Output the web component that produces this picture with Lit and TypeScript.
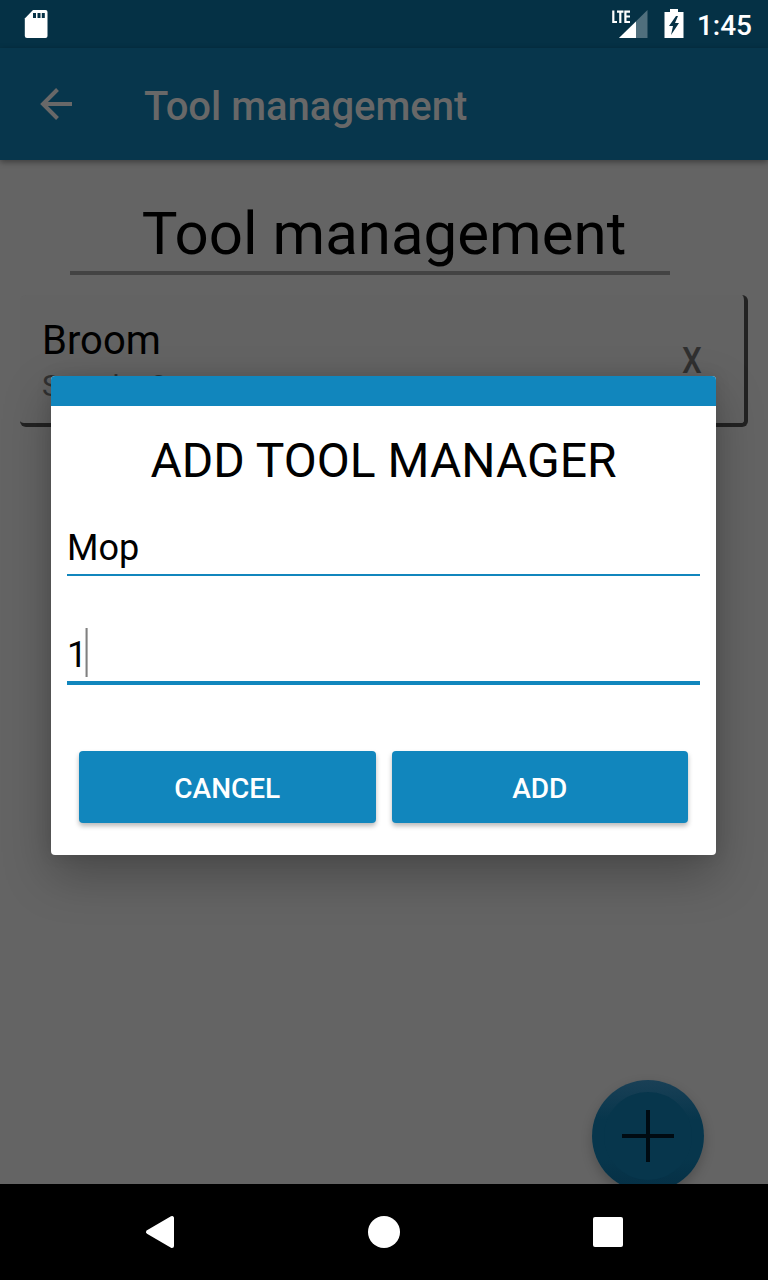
import { LitElement, html, css } from "lit";
import { customElement } from "lit/decorators.js";

@customElement("app-root")
export class AppRoot extends LitElement {
  static styles = css`
    :host { display: block; font-family: Roboto, sans-serif; color: #000; }
    * { box-sizing: border-box; }
    .screen { position: relative; width: 768px; height: 1280px; overflow: hidden; display: flex; flex-direction: column; background: #646464; }
    .status { height: 48px; flex: none; background: #053145; display: flex; align-items: center; padding: 0 16px 0 24px; color: #fff; }
    .status .gap { flex: 1; }
    .status svg, .bar svg, .nav svg, .fab svg { display: block; flex: none; }
    .signal { margin-right: 16px; }
    .clock { font-size: 28px; font-weight: 500; line-height: 46px; margin-left: 13px; padding-top: 4px; }
    .bar { height: 112px; flex: none; background: #07364c; display: flex; align-items: center; padding-left: 32px; box-shadow: 0 2px 6px rgba(0,0,0,.4); z-index: 1; color: #686868; }
    .bar h1 { margin: 5px 0 0 64px; font-size: 40px; line-height: 48px; font-weight: 500; }
    .content { flex: 1; padding: 32px 20px 0; }
    .title { width: 600px; margin: 0 0 0 50px; height: 83px; border-bottom: 4px solid #434343; font-size: 60px; line-height: 83px; text-align: center; padding-left: 28px; }
    .card { margin-top: 20px; height: 132px; border-radius: 6px; border-right: 4px solid #222; border-bottom: 4px solid #222; background: #636363; display: flex; align-items: center; justify-content: space-between; padding: 0 42px 0 22px; }
    .info { padding-top: 7px; }
    .name { font-size: 40px; line-height: 47px; }
    .sub { font-size: 30px; line-height: 44px; letter-spacing: 2.6px; color: #323232; }
    .remove { font-size: 36px; color: #303030; font-weight: 500; transform: translate(1.5px, 2px) scaleX(.87); }
    .fab { position: absolute; left: 592px; top: 1080px; width: 112px; height: 112px; border-radius: 50%; background: linear-gradient(#1a4056, #07364c 35%, #07364c 70%, #052f44); display: grid; place-items: center; box-shadow: 0 5px 12px rgba(0,0,0,.22); }
    .fab::before { content: ""; grid-area: 1/1; width: 88px; height: 88px; border-radius: 50%; background: #07364c; }
    .fab svg { grid-area: 1/1; }
    .nav { height: 96px; flex: none; background: #000; z-index: 1; display: flex; justify-content: space-between; align-items: center; padding: 0 144px; }
    .dialog { position: absolute; z-index: 2; left: 51px; top: 376px; width: 665px; height: 479px; border-radius: 4px; background: #fff; box-shadow: 0 20px 48px rgba(0,0,0,.27), 0 0 16px rgba(0,0,0,.1); display: flex; flex-direction: column; }
    .strip { height: 30px; flex: none; background: #1186bd; border-radius: 4px 4px 0 0; }
    .dialog h2 { margin: 27px 0 0; font-weight: 400; font-size: 48px; line-height: 56px; text-align: center; }
    .field { margin: 0 16px; font-size: 36px; line-height: 42px; display: flex; }
    .first { margin-top: 32px; height: 55px; border-bottom: 2px solid #1186bd; }
    .first span { padding-top: 6px; }
    .second { margin-top: 52px; height: 57px; border-bottom: 4px solid #1186bd; }
    .second span { padding-top: 6px; }
    .caret { width: 3px; height: 49px; background: linear-gradient(90deg, #c4c4c4 1px, #808080 1px 2px, #b0b0b0 2px); margin-left: -2px; }
    .actions { margin: 66px 28px 0; display: flex; gap: 16px; }
    .btn { flex: 1; height: 72px; border: 0; border-radius: 4px; padding: 2px 0 0; background: #1186bd; color: #fff; font: 500 28px/72px Roboto, sans-serif; box-shadow: 0 3px 5px rgba(0,0,0,.28); }
  `;

  render() {
    return html`
      <div class="screen">
        <div class="status">
          <svg width="24" height="48" viewBox="0 0 24 48"><path fill="#fff" d="M9 10H21.500Q23.500 10 23.500 12V36Q23.500 38 21.500 38H3Q.8 38 .8 36V18.500Z"/><path fill="#053145" d="M9 13h3v5H9zm4.500 0h3v5h-3zm4.300 0h3v5h-3z"/></svg>
          <div class="gap"></div>
          <svg class="signal" width="36" height="48" viewBox="0 0 36 48"><path fill="#fff" opacity=".3" d="M35.500 10V38H7z"/><path fill="#fff" d="M24 21.500V38H7z"/><g fill="none" stroke="#fff" stroke-width="2.200"><path d="M1.300 10.500V22H5M5 11.600h6.500M8.300 11v12M18 11.600h-4.600V22H18M14 16.500h4"/></g></svg>
          <svg width="20" height="48" viewBox="0 0 20 48"><path fill="#fff" d="M6 9h8v3h5.500v26H.5V12H6z"/><path fill="#053145" d="M12 16L5 26h4l-2 9 8-12h-4l3-7z"/></svg>
          <span class="clock">1:45</span>
        </div>
        <div class="bar">
          <svg width="48" height="48" viewBox="0 0 48 48"><path d="M40 24H11M25.500 9.500L11 24L25.500 38.500" fill="none" stroke="#686868" stroke-width="4"/></svg>
          <h1>Tool management</h1>
        </div>
        <div class="content">
          <div class="title">Tool management</div>
          <div class="card">
            <div class="info"><div class="name">Broom</div><div class="sub">Stock: 2</div></div>
            <div class="remove">X</div>
          </div>
        </div>
        <div class="fab"><svg width="56" height="56" viewBox="0 0 56 56"><path d="M28 2v52M2 28h52" stroke="#000b12" stroke-width="4"/></svg></div>
        <div class="nav">
          <svg width="32" height="36" viewBox="0 0 32 36"><path d="M28 4V32L4 18Z" fill="#fff" stroke="#fff" stroke-width="4" stroke-linejoin="round"/></svg>
          <svg width="32" height="32" viewBox="0 0 32 32"><circle cx="16" cy="16" r="16" fill="#fff"/></svg>
          <svg width="32" height="32" viewBox="0 0 32 32"><rect x="1" y="1" width="30" height="30" rx="2" fill="#fff"/></svg>
        </div>
        <div class="dialog">
          <div class="strip"></div>
          <h2>ADD TOOL MANAGER</h2>
          <div class="field first"><span>Mop</span></div>
          <div class="field second"><span>1</span><i class="caret"></i></div>
          <div class="actions"><button class="btn">CANCEL</button><button class="btn">ADD</button></div>
        </div>
      </div>`;
  }
}
